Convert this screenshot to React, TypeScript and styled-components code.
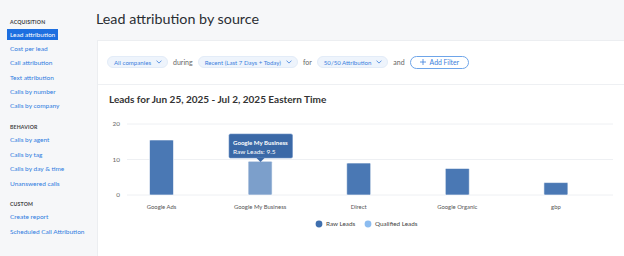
import React from 'react'
import styled, { createGlobalStyle } from 'styled-components'

const GlobalStyle = createGlobalStyle`
    html, body {
        margin: 0;
        padding: 0;
        background: #f6f7f9;
        font-family: Lato, "Liberation Sans", sans-serif;
    }
`

const Page = styled.div`
    display: flex;
    width: 624px;
    height: 256px;
    overflow: hidden;
    background: #f6f7f9;
`

const Sidebar = styled.nav`
    width: 97px;
    flex: none;
    padding: 18.5px 0 0 7px;
    box-sizing: border-box;
`

const NavGroup = styled.div`
    display: flex;
    flex-direction: column;
    margin-bottom: 9.5px;
`

const NavHeading = styled.div`
    font-size: 5.2px;
    font-weight: 700;
    letter-spacing: 0.15px;
    color: #444;
    padding-left: 3px;
    height: 7px;
    line-height: 7px;
    margin-bottom: 3px;
`

const NavLink = styled.a<{ $active?: boolean }>`
    display: inline-block;
    align-self: flex-start;
    font-size: 6.5px;
    line-height: 11px;
    height: 11px;
    padding: 0 3px;
    margin-bottom: 3.4px;
    color: ${({ $active }) => ($active ? '#fff' : '#2f7ce0')};
    background: ${({ $active }) => ($active ? '#1d6fe0' : 'transparent')};
    white-space: nowrap;
`

const Main = styled.main`
    flex: 1;
    display: flex;
    flex-direction: column;
    min-width: 0;
`

const Title = styled.h1`
    margin: 0 0 0 -1px;
    padding-top: 10px;
    height: 40px;
    box-sizing: border-box;
    font-size: 14.3px;
    font-weight: 400;
    color: #2a2e33;
    line-height: 18px;
`

const Card = styled.section`
    flex: 1;
    background: #fff;
    border-left: 1px solid #eceef1;
    border-top: 1px solid #eceef1;
    display: flex;
    flex-direction: column;
`

const FilterRow = styled.div`
    display: flex;
    align-items: center;
    gap: 4px;
    height: 44px;
    padding: 0 0 1px 9px;
    border-bottom: 1px solid #eef0f3;
    box-sizing: border-box;
`

const Pill = styled.button`
    display: flex;
    align-items: center;
    gap: 5px;
    height: 12px;
    padding: 0 5px 0 6px;
    border-radius: 7px;
    border: 1px solid #e3ecf8;
    background: #eef4fc;
    color: #3a7fdc;
    font-family: inherit;
    font-size: 6.1px;
    white-space: nowrap;
`

const Joiner = styled.span`
    font-size: 7px;
    color: #666;
    margin: 0 1px;
`

const AddFilter = styled.button`
    display: flex;
    align-items: center;
    gap: 4px;
    height: 13px;
    padding: 0 9px 0 9px;
    border-radius: 7px;
    border: 1px solid #6ea5e9;
    background: #fff;
    color: #3a7fdc;
    font-family: inherit;
    font-size: 6.8px;
    white-space: nowrap;
`

const ChartSection = styled.div`
    display: flex;
    flex-direction: column;
    padding-top: 8px;
`

const ChartTitle = styled.h2`
    margin: 0 0 0 11px;
    font-size: 10px;
    font-weight: 700;
    color: #333;
    line-height: 12px;
    height: 19px;
`

const Chevron = () => (
    <svg width="6" height="4" viewBox="0 0 6 4" fill="none">
        <path d="M0.5 0.6 L3 3.1 L5.5 0.6" stroke="#3a7fdc" strokeWidth="0.8" />
    </svg>
)

const Plus = () => (
    <svg width="6" height="6" viewBox="0 0 6 6">
        <path d="M3 0 V6 M0 3 H6" stroke="#3a7fdc" strokeWidth="0.8" />
    </svg>
)

const bars = [
    { name: 'Google Ads', value: 15.5 },
    { name: 'Google My Business', value: 9.5 },
    { name: 'Direct', value: 9 },
    { name: 'Google Organic', value: 7.5 },
    { name: 'gbp', value: 3.5 },
]

const base = 195
const scale = 3.55
const step = 98.6
const first = 160.5
const barW = 24

const Chart = () => (
    <svg width="527" height="125" viewBox="97 112 527 125" fontFamily="Lato, sans-serif">
        {[20, 10, 0].map((t) => (
            <g key={t}>
                <line x1="126" x2="612" y1={base - t * scale} y2={base - t * scale} stroke="#eef0f3" strokeWidth="1" />
                <text x="119" y={base - t * scale + 2.3} fontSize="6.4" fill="#666" textAnchor="end">
                    {t}
                </text>
            </g>
        ))}
        {bars.map((b, i) => {
            const cx = first + i * step
            const h = b.value * scale
            return (
                <g key={b.name}>
                    <rect
                        x={cx - barW / 2}
                        y={base - h}
                        width={barW}
                        height={h}
                        rx="1"
                        fill={i === 1 ? '#7c9fcb' : '#4a78b4'}
                        stroke="#fff"
                        strokeWidth="0.6"
                    />
                    <text x={cx} y="209.3" fontSize="5.9" fill="#555" textAnchor="middle">
                        {b.name}
                    </text>
                </g>
            )
        })}
        <g>
            <rect x="228" y="134" width="63.5" height="24" rx="1.5" fill="#3b69a7" stroke="#6f94c6" strokeWidth="0.6" />
            <path d="M255.5 158 L259.5 162 L263.5 158 Z" fill="#3b69a7" />
            <text x="232" y="144.5" fontSize="6.1" fontWeight="700" fill="#fff">
                Google My Business
            </text>
            <text x="232" y="153.5" fontSize="6.5" fill="#fff">
                Raw Leads: 9.5
            </text>
        </g>
        <circle cx="318" cy="224" r="3.4" fill="#3f6fae" />
        <text x="325" y="226.3" fontSize="6.3" fill="#444">
            Raw Leads
        </text>
        <circle cx="367" cy="224" r="3.4" fill="#8cbcf0" />
        <text x="374" y="226.3" fontSize="6.3" fill="#444">
            Qualified Leads
        </text>
    </svg>
)

const groups = [
    {
        heading: 'ACQUISITION',
        links: ['Lead attribution', 'Cost per lead', 'Call attribution', 'Text attribution', 'Calls by number', 'Calls by company'],
    },
    { heading: 'BEHAVIOR', links: ['Calls by agent', 'Calls by tag', 'Calls by day & time', 'Unanswered calls'] },
    { heading: 'CUSTOM', links: ['Create report', 'Scheduled Call Attribution'] },
]

export default function App() {
    return (
        <>
            <GlobalStyle />
            <Page>
                <Sidebar>
                    {groups.map((g) => (
                        <NavGroup key={g.heading}>
                            <NavHeading>{g.heading}</NavHeading>
                            {g.links.map((l) => (
                                <NavLink key={l} $active={l === 'Lead attribution'}>
                                    {l}
                                </NavLink>
                            ))}
                        </NavGroup>
                    ))}
                </Sidebar>
                <Main>
                    <Title>Lead attribution by source</Title>
                    <Card>
                        <FilterRow>
                            <Pill>
                                All companies <Chevron />
                            </Pill>
                            <Joiner>during</Joiner>
                            <Pill>
                                Recent (Last 7 Days + Today) <Chevron />
                            </Pill>
                            <Joiner>for</Joiner>
                            <Pill>
                                50/50 Attribution <Chevron />
                            </Pill>
                            <Joiner>and</Joiner>
                            <AddFilter>
                                <Plus /> Add Filter
                            </AddFilter>
                        </FilterRow>
                        <ChartSection>
                            <ChartTitle>Leads for Jun 25, 2025 - Jul 2, 2025 Eastern Time</ChartTitle>
                            <Chart />
                        </ChartSection>
                    </Card>
                </Main>
            </Page>
        </>
    )
}
